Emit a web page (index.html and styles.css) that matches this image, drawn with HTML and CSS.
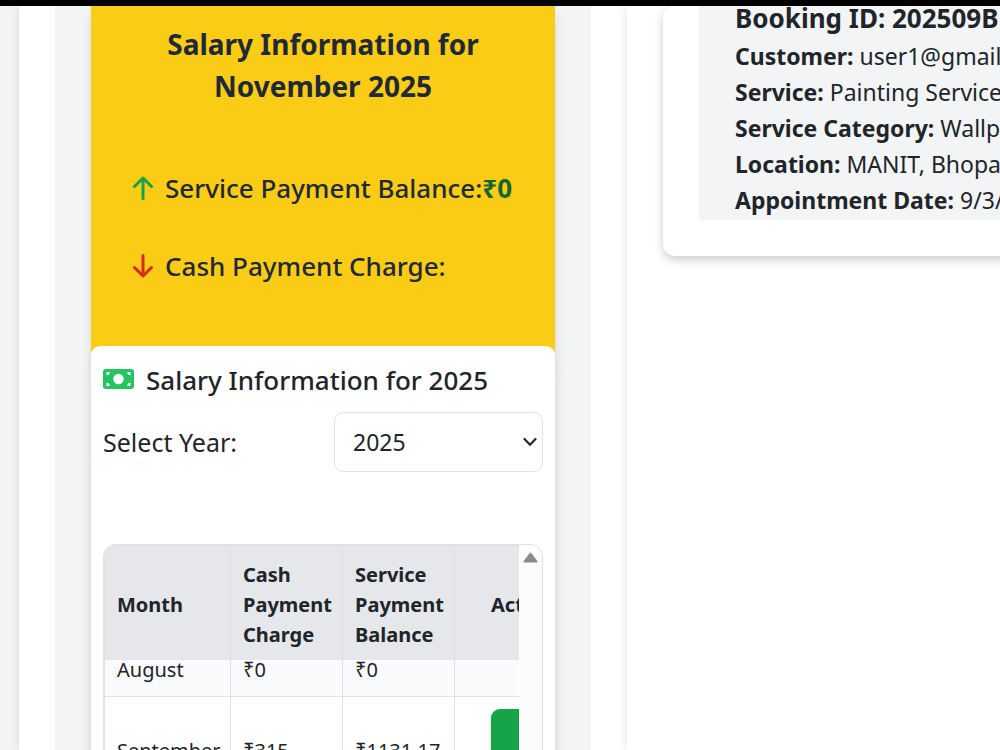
FILE: index.html
```html
<!DOCTYPE html>
<html lang="en">
<head>
<meta charset="utf-8">
<meta name="viewport" content="width=device-width, initial-scale=1">
<title>Salary Information</title>
<link rel="stylesheet" href="styles.css">
</head>
<body>
<div class="topbar"></div>
<main class="page">
  <aside class="side-panel">
    <div class="side-inner">
      <section class="summary">
        <h2 class="summary-title">Salary Information for November 2025</h2>
        <p class="summary-row">
          <svg class="arrow arrow-up" viewBox="0 0 24 26" aria-hidden="true"><path d="M12 23.500V3M3.500 11.500L12 3l8.500 8.500"/></svg>
          <span>Service Payment Balance:<strong class="amount">₹0</strong></span>
        </p>
        <p class="summary-row">
          <svg class="arrow arrow-down" viewBox="0 0 24 26" aria-hidden="true"><path d="M12 2.500V23M3.500 14.500L12 23l8.500-8.500"/></svg>
          <span>Cash Payment Charge:</span>
        </p>
      </section>
      <section class="salary-card">
        <h3 class="salary-title">
          <svg class="money" viewBox="0 0 31 20" aria-hidden="true">
            <rect width="31" height="20" rx="3" fill="#22c55e"/>
            <circle cx="15.500" cy="10" r="5.200" fill="#fff"/>
            <path fill="#fff" d="M3.500 3h3.200a3.200 3.200 0 0 1-3.200 3.200zM27.500 3v3.200A3.200 3.200 0 0 1 24.300 3zM3.500 17v-3.200A3.200 3.200 0 0 1 6.700 17zM27.500 17h-3.200a3.200 3.200 0 0 1 3.200-3.200z"/>
          </svg>
          <span>Salary Information for 2025</span>
        </h3>
        <div class="year-row">
          <label for="year">Select Year:</label>
          <div class="select-wrap">
            <select id="year" class="year-select"><option>2025</option></select>
            <svg class="chevron" viewBox="0 0 14 10" aria-hidden="true"><path d="M1.500 2L7 7.700 12.500 2"/></svg>
          </div>
        </div>
        <div class="table-box">
          <div class="table-view">
            <table class="salary-table">
              <thead>
                <tr><th class="col-month">Month</th><th class="col-value">Cash Payment Charge</th><th class="col-value">Service Payment Balance</th><th class="col-action">Action</th></tr>
              </thead>
              <tbody>
                <tr class="row-partial"><td>August</td><td>₹0</td><td>₹0</td><td></td></tr>
                <tr><td>September</td><td>₹315</td><td>₹1131.17</td><td class="col-action"><button class="pay-button" type="button" aria-label="Action"></button></td></tr>
              </tbody>
            </table>
          </div>
          <div class="scroll-track">
            <svg class="scroll-up" viewBox="0 0 15 11" aria-hidden="true"><path d="M7.500 1.500L13.500 9.500h-12z"/></svg>
          </div>
        </div>
      </section>
    </div>
  </aside>
  <section class="bookings">
    <article class="booking-card">
      <div class="booking-info">
        <h3 class="booking-id">Booking ID: 202509B</h3>
        <p><strong>Customer:</strong> user1@gmail.</p>
        <p><strong>Service:</strong> Painting Services</p>
        <p><strong>Service Category:</strong> Wallpa</p>
        <p><strong>Location:</strong> MANIT, Bhopa</p>
        <p><strong>Appointment Date:</strong> 9/3/</p>
      </div>
    </article>
  </section>
</main>
</body>
</html>
```
FILE: styles.css
```css
* { box-sizing: border-box; }
body {
  margin: 0;
  height: 100vh;
  overflow: hidden;
  display: flex;
  flex-direction: column;
  background: #f3f4f6;
  color: #212529;
  font-family: "Noto Sans", "Open Sans", sans-serif;
  font-size: 23px;
  line-height: 36px;
}
h2, h3, p { margin: 0; }
.topbar { flex: none; height: 6px; background: #000; }
.page { flex: 1; min-height: 0; display: flex; padding-left: 19px; }
.side-panel {
  flex: none;
  width: 608px;
  padding: 0 36px;
  background: #fff;
  box-shadow: 0 0 10px rgba(0, 0, 0, .12);
}
.side-inner { padding: 0 36px; background: #f3f4f6; }
.summary {
  display: flex;
  flex-direction: column;
  gap: 36px;
  padding: 17px 36px 71px;
  background: #facc15;
  color: #1f2937;
  box-shadow: 0 8px 10px rgba(0, 0, 0, .12);
}
.summary-title {
  margin-bottom: 24px;
  font-size: 28px;
  line-height: 42px;
  text-align: center;
}
.summary-row {
  display: flex;
  align-items: center;
  gap: 10px;
  font-size: 26px;
  font-weight: 500;
  line-height: 42px;
  white-space: nowrap;
}
.arrow {
  flex: none;
  width: 24px;
  height: 26px;
  margin-left: 4px;
  fill: none;
  stroke-width: 3;
  stroke-linecap: round;
  stroke-linejoin: round;
}
.arrow-up { stroke: #16a34a; }
.arrow-down { stroke: #dc2626; }
.amount { color: #166534; }
.salary-card {
  position: relative;
  margin-top: -12px;
  padding: 13px 12px;
  background: #fff;
  border-radius: 9px;
  box-shadow: 0 15px 12px rgba(0, 0, 0, .14);
}
.salary-title {
  display: flex;
  align-items: center;
  gap: 12px;
  font-size: 26px;
  font-weight: 500;
  line-height: 42px;
  white-space: nowrap;
}
.money { flex: none; width: 31px; height: 20px; margin-bottom: 2px; }
.year-row {
  display: flex;
  align-items: center;
  justify-content: space-between;
  margin: 11px 0 72px;
  font-size: 25px;
}
.select-wrap { position: relative; width: 209px; }
.year-select {
  width: 100%;
  height: 60px;
  padding: 0 18px;
  appearance: none;
  border: 1px solid #dee2e6;
  border-radius: 9px;
  background: #fff;
  color: #212529;
  font: inherit;
  font-size: 23px;
}
.chevron {
  position: absolute;
  right: 6px;
  top: 25px;
  width: 14px;
  height: 10px;
  fill: none;
  stroke: #212529;
  stroke-width: 2.2;
  stroke-linecap: round;
  pointer-events: none;
}
.table-box {
  display: flex;
  overflow: hidden;
  border: 1px solid #dee2e6;
  border-radius: 12px;
}
.table-view { flex: 1; min-width: 0; overflow: hidden; }
.salary-table {
  width: 560px;
  table-layout: fixed;
  border-collapse: collapse;
  font-size: 20px;
  line-height: 30px;
}
.salary-table th, .salary-table td {
  padding: 12px;
  border: 1px solid #dee2e6;
  text-align: left;
}
.salary-table th { padding: 14px 0 10px 12px; border-bottom: 0; background: #e5e7eb; }
.salary-table tr { background: #fff; }
.salary-table .row-partial td {
  height: 36px;
  padding: 0 12px 15px;
  border-top: 0;
  background: #f9fafb;
  line-height: 20px;
}
.col-month { width: 126px; }
.col-value { width: 112px; }
.salary-table .col-action { padding-left: 36px; }
.pay-button {
  display: block;
  width: 140px;
  height: 84px;
  border: 0;
  border-radius: 9px;
  background: #16a34a;
  box-shadow: 0 2px 4px rgba(0, 0, 0, .2);
}
.scroll-track { flex: none; width: 23px; padding: 7px 4px; background: #fcfcfc; line-height: 0; }
.scroll-up { width: 15px; height: 11px; fill: #8b8b8b; stroke: #8b8b8b; stroke-width: 2; stroke-linejoin: round; }
.bookings {
  flex: 1;
  min-width: 0;
  padding-left: 36px;
  background: #fff;
  overflow: hidden;
  box-shadow: 0 0 10px rgba(0, 0, 0, .12);
}
.booking-card {
  width: max-content;
  min-width: 110%;
  padding: 0 36px 36px;
  border-radius: 12px;
  box-shadow: 0 4px 10px rgba(0, 0, 0, .2);
}
.booking-info {
  padding: 0 36px 2px;
  border-radius: 0 0 2px 2px;
  background: #f3f4f6;
  white-space: nowrap;
}
.booking-id { padding-bottom: 8px; font-size: 26px; line-height: 24px; }
```
